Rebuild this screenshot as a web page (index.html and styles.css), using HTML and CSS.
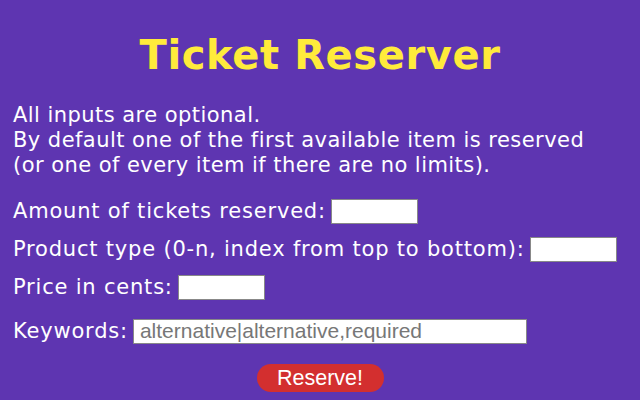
FILE: index.html
```html
<!DOCTYPE html>
<html lang="en">
<head>
    <meta charset="UTF-8">
    <title>Ticket Reserver</title>
    <link rel="stylesheet" href="styles.css">
</head>
<body>
    <div class="container">
        <h1>Ticket Reserver</h1>
        <p class="intro">All inputs are optional.<br>By default one of the first available item is reserved<br>(or one of every item if there are no limits).</p>
        <div class="field">
            <label for="amount">Amount of tickets reserved:</label>
            <input type="text" id="amount" class="short">
        </div>
        <div class="field">
            <label for="type">Product type (0-n, index from top to bottom):</label>
            <input type="text" id="type" class="short">
        </div>
        <div class="field">
            <label for="price">Price in cents:</label>
            <input type="text" id="price" class="short">
        </div>
        <div class="field keywords">
            <label for="keywords">Keywords:</label>
            <input type="text" id="keywords" class="long" placeholder="alternative|alternative,required">
        </div>
        <div class="actions">
            <button>Reserve!</button>
        </div>
    </div>
</body>
</html>
```

FILE: styles.css
```css
body {
    background-color: #5E35B1;
    font-family: "DejaVu Sans", Verdana, sans-serif;
    color: #FFFFFF;
    margin: 0;
}
.container {
    padding: 0 13px;
}
h1 {
    color: #FFEB3B;
    text-align: center;
    font-size: 40px;
    letter-spacing: 0.6px;
    margin: 0;
    padding-top: 30px;
    line-height: 50px;
}
.intro {
    font-size: 21px;
    letter-spacing: 0.45px;
    line-height: 25px;
    margin: 23px 0 14px;
}
.field {
    display: flex;
    align-items: center;
    gap: 5px;
    font-size: 21px;
    letter-spacing: 0.8px;
    height: 38px;
}
.field input {
    height: 25px;
    box-sizing: border-box;
    border: 1px solid #888;
    background: #fff;
    font-family: "Liberation Sans", Arial, sans-serif;
    font-size: 21px;
    letter-spacing: 0;
    padding: 0 6px;
}
.field .short { width: 87px; }
.field .long { width: 394px; }
.field input::placeholder { color: #777; }
.keywords { margin-top: 6px; }
.actions {
    text-align: center;
    margin-top: 14px;
}
button {
    width: 127px;
    height: 28px;
    background-color: #D32F2F;
    color: white;
    border: none;
    border-radius: 14px;
    font-family: "Liberation Sans", Arial, sans-serif;
    font-size: 21.5px;
    cursor: pointer;
}
```
